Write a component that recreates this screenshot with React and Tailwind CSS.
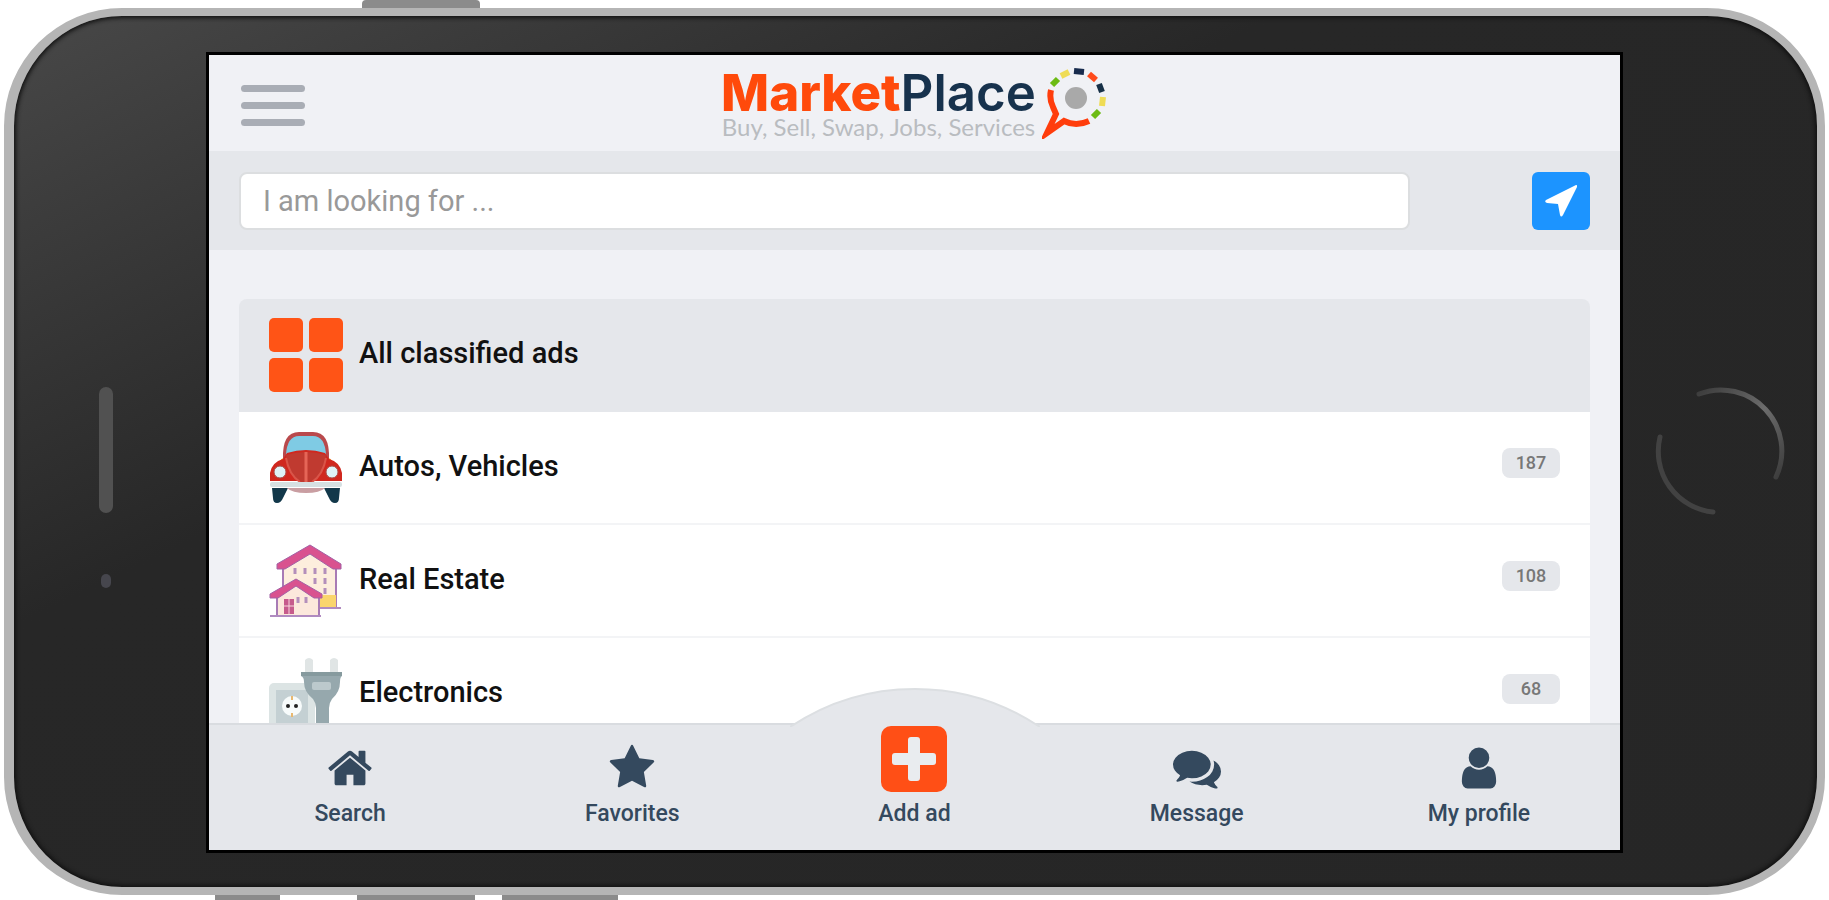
const NAV_PATHS = {
  home: "M1472 992v480q0 26-19 45t-45 19h-384v-384h-256v384h-384q-26 0-45-19t-19-45v-480q0-1 .5-3t.5-3l575-474 575 474q1 2 1 6zm223-69l-62 74q-8 9-21 11h-3q-13 0-21-7l-692-577-692 577q-12 8-24 7-13-2-21-11l-62-74q-8-10-7-23.5t11-21.5l719-599q32-26 76-26t76 26l244 204v-195q0-14 9-23t23-9h192q14 0 23 9t9 23v408l219 182q10 8 11 21.5t-7 23.5z",
  star: "M1728 647q0 22-26 48l-363 354 86 500q1 7 1 20 0 21-10.500 35.500t-30.500 14.500q-19 0-40-12l-449-236-449 236q-22 12-40 12-21 0-31.500-14.500t-10.500-35.500q0-6 2-20l86-500-364-354q-25-27-25-48 0-37 56-46l502-73 225-455q19-41 49-41t49 41l225 455 502 73q56 9 56 46z",
  message: "M1408 768q0 139-94 257t-256.500 186.500-353.500 68.500q-86 0-176-16-124 88-278 128-36 9-86 16h-3q-11 0-20.500-8t-11.500-21q-1-3-1-6.500t.5-6.500 2-6l2.500-5 3.500-5.500 4-5 4.500-5 4-4.500q5-6 23-25t26-29.500 22.500-29 25-38.500 20.500-44q-124-72-195-177t-71-224q0-139 94-257t256.500-186.500 353.500-68.500 353.500 68.500 256.500 186.500 94 257zm384 256q0 120-71 224.500t-195 176.500q10 24 20.500 44t25 38.500 22.500 29 26 29.500 23 25q1 1 4 4.500t4.500 5 4 5 3.500 5.500l2.500 5 2 6 .5 6.500-1 6.500q-3 14-13 22t-22 7q-50-7-86-16-154-40-278-128-90 16-176 16-271 0-472-132 58 4 88 4 161 0 309-45t264-129q125-92 192-212t67-254q0-77-23-152 129 71 204 178t75 230z",
  user: "M1536 1399q0 109-62.500 187t-150.500 78h-854q-88 0-150.500-78t-62.500-187q0-85 8.500-160.500t31.500-152 58.500-131 94-89 134.500-34.500q131 128 313 128t313-128q76 0 134.500 34.500t94 89 58.500 131 31.500 152 8.500 160.500zm-256-887q0 159-112.500 271.500t-271.500 112.500-271.500-112.500-112.500-271.500 112.500-271.500 271.500-112.500 271.500 112.500 112.500 271.500z",
};

const NavIcon = ({ name }) => (
  <svg viewBox="0 0 1792 1792" className="size-12" fill="currentColor" aria-hidden="true">
    <path d={NAV_PATHS[name]} />
  </svg>
);

const AddIcon = () => (
  <svg viewBox="0 0 66 66" className="size-[66px]" aria-hidden="true">
    <rect width="66" height="66" rx="10" fill="#ff4f16" />
    <path d="M27 14q0-3 3-3h6q3 0 3 3v13h13q3 0 3 3v6q0 3-3 3H39v13q0 3-3 3h-6q-3 0-3-3V39H14q-3 0-3-3v-6q0-3 3-3h13z" fill="#e9ecef" />
  </svg>
);

const ArrowIcon = () => (
  <svg viewBox="0 0 32 32" className="size-8" fill="currentColor" aria-hidden="true">
    <path d="M31 0Q33 0 32 2L18 30Q16 33 15 30L13 19 2 18Q-1 17 1 15Z" />
  </svg>
);

const GridIcon = () => (
  <svg viewBox="0 0 74 74" className="size-full" fill="#ff5416" aria-hidden="true">
    <rect width="34" height="34" rx="5" />
    <rect x="40" width="34" height="34" rx="5" />
    <rect y="40" width="34" height="34" rx="5" />
    <rect x="40" y="40" width="34" height="34" rx="5" />
  </svg>
);

const CarIcon = () => (
  <svg viewBox="0 0 74 74" className="size-full" aria-hidden="true">
    <path d="M3 57h16l-5 10q-2 5-6 5t-4-5z" fill="#12384a" />
    <path d="M71 57H55l5 10q2 5 6 5t4-5z" fill="#12384a" />
    <path d="M18 57h38q-5 5-19 5t-19-5z" fill="#c99ea2" />
    <path d="M9 34q2-8 10-8v10zM65 34q-2-8-10-8v10z" fill="#f59a23" />
    <path d="M14 28Q13 1 30 1h14q17 0 16 27z" fill="#b9494c" />
    <path d="M17 24Q18 5 30 5h14q12 0 13 19z" fill="#7fcbe4" />
    <path d="M1 50V42Q3 31 14 28l4-6q19-6 38 0l4 6q11 3 13 14v8z" fill="#d0281f" />
    <path d="M17 24q20-6 40 0-1 18-14 27H31Q18 42 17 24z" fill="#c03a30" />
    <path d="M37 21v30" stroke="#e56557" strokeWidth="3" fill="none" />
    <path d="M17 27q3 17 14 24M57 27q-3 17-14 24" stroke="#d95549" strokeWidth="2" fill="none" />
    <circle cx="11" cy="41" r="6" fill="#dff3f7" stroke="#a9504c" strokeWidth="1" />
    <circle cx="63" cy="41" r="6" fill="#dff3f7" stroke="#a9504c" strokeWidth="1" />
    <rect x="1" y="51" width="72" height="5" rx="2" fill="#d6e0e2" />
  </svg>
);

const HouseIcon = () => (
  <svg viewBox="0 0 74 74" className="size-full" aria-hidden="true">
    <path d="M14 22 41 6l26 16v42H14z" fill="#fdeedd" stroke="#a87bb5" strokeWidth="2" />
    <path d="M50 51h17v12H50z" fill="#fad56d" />
    <path d="M26 24v6M36 24v6M46 24v6M56 24v6M46 34v6M56 34v6M56 44v6" stroke="#b48fbb" strokeWidth="3" />
    <path d="M8 20 41 1l31 19v5H64L41 10 16 25H8z" fill="#d9528f" stroke="#a361a5" strokeWidth="1" />
    <path d="M49 64h23" stroke="#b08bc0" strokeWidth="2" />
    <path d="M8 51 27 38l23 13v21H8z" fill="#fce8dc" stroke="#a87bb5" strokeWidth="2" />
    <path d="M29 53v6M37 53v6" stroke="#b48fbb" strokeWidth="3" />
    <path d="M15 55h10v15H15z" fill="#c65b8c" />
    <path d="M20 55v15M15 62h10" stroke="#f8d7dc" strokeWidth="1" />
    <path d="M1 50 27 35l26 15v4h-8L27 42 9 54H1z" fill="#d9528f" stroke="#a361a5" strokeWidth="1" />
    <path d="M1 72h51" stroke="#b08bc0" strokeWidth="2" />
  </svg>
);

const PlugIcon = () => (
  <svg viewBox="0 0 74 74" className="size-full" aria-hidden="true">
    <rect y="26" width="46" height="48" rx="5" fill="#dce4e4" />
    <rect x="7" y="33" width="32" height="41" fill="#c4d0d3" />
    <circle cx="23" cy="49" r="10" fill="#f7fbfb" />
    <circle cx="19" cy="49" r="2" fill="#222" />
    <circle cx="27" cy="49" r="2" fill="#222" />
    <path d="M23 39v4M23 56v4" stroke="#e8b870" strokeWidth="2" />
    <path d="M36 3q4-4 8 0v13h-8zM61 3q4-4 8 0v13h-8z" fill="#e0e5e5" />
    <path d="M32 15h41v4q-2 1-2 6 0 10-8 17-3 4-3 9v23H47V51q0-5-3-9-9-7-9-17 0-5-3-6z" fill="#96a8ad" />
    <path d="M32 15h41v4H32z" fill="#869a9e" />
    <rect x="43" y="25" width="19" height="8" rx="2" fill="#bcc9cc" />
  </svg>
);

const LogoMark = () => (
  <svg viewBox="0 0 66 72" className="mb-1 h-[72px] w-[66px]" fill="none" aria-hidden="true">
    <path d="M9 23q-2 9 2 17l3 7L5 66l17-12q12 6 25 0" stroke="#ff3d0c" strokeWidth="6" />
    <circle cx="34" cy="31" r="11" fill="#a9a9a9" />
    <g strokeWidth="6">
      <path d="m10 18 6-6" stroke="#6cbb14" />
      <path d="m19 9 8-4" stroke="#efdc55" />
      <path d="m32 4 10 1" stroke="#172b4d" />
      <path d="m47 7 7 6" stroke="#ff4b1c" />
      <path d="m57 17 3 8" stroke="#173047" />
      <path d="m61 30-1 9" stroke="#efdc55" />
      <path d="m57 44-6 6" stroke="#6cbb14" />
    </g>
  </svg>
);

const CATEGORIES = [
  { name: "All classified ads", Icon: GridIcon },
  { name: "Autos, Vehicles", Icon: CarIcon, count: 187 },
  { name: "Real Estate", Icon: HouseIcon, count: 108 },
  { name: "Electronics", Icon: PlugIcon, count: 68 },
];

const NAV_ITEMS = [
  { label: "Search", icon: "home" },
  { label: "Favorites", icon: "star" },
  { label: "Add ad" },
  { label: "Message", icon: "message" },
  { label: "My profile", icon: "user" },
];

const Header = () => (
  <header className="grid h-24 shrink-0 grid-cols-[1fr_auto_1fr] items-center px-8 pt-1">
    <button aria-label="Menu" className="flex w-16 flex-col gap-2.5">
      <span className="h-[7px] rounded-full bg-[#a9adb5]" />
      <span className="h-[7px] rounded-full bg-[#a9adb5]" />
      <span className="h-[7px] rounded-full bg-[#a9adb5]" />
    </button>
    <a href="#" className="flex items-center gap-1.5">
      <span className="flex flex-col items-center">
        <span className="font-[Inter] text-[51px] leading-[44px] font-semibold text-[#17324d]">
          <span className="font-extrabold text-[#ff4a0b]">Market</span>Place
        </span>
        <span className="font-[Lato] text-[24px] leading-6 text-[#b9bcc0]">Buy, Sell, Swap, Jobs, Services</span>
      </span>
      <LogoMark />
    </a>
  </header>
);

const SearchBar = () => (
  <form className="flex h-[99px] shrink-0 items-center bg-[#e5e7eb] px-[30px]">
    <input
      type="text"
      aria-label="I am looking for"
      placeholder="I am looking for ..."
      className="mr-[122px] h-[58px] min-w-0 flex-1 rounded-lg border-2 border-[#dcdee0] bg-white px-[22px] text-[29px] text-[#555] outline-none placeholder:text-[#999]"
    />
    <button type="button" aria-label="Use my location" className="flex size-[58px] items-center justify-center rounded-md bg-[#1c94ff] text-white">
      <ArrowIcon />
    </button>
  </form>
);

const CategoryList = () => (
  <ul className="mx-[30px] mt-[49px] overflow-hidden rounded-t-lg">
    {CATEGORIES.map(({ name, Icon, count }) => (
      <li key={name} className="border-b-2 border-[#f3f4f6] bg-white first:border-[#e5e7eb] first:bg-[#e5e7eb]">
        <a href="#" className="flex h-[111px] items-center px-[30px]">
          <span className="size-[74px]"><Icon /></span>
          <span className="mb-1 ml-4 flex-1 text-[29px] leading-8 font-medium text-[#111]">{name}</span>
          {count && (
            <span className="mb-2.5 flex h-[30px] w-[58px] items-center justify-center rounded-lg bg-[#e5e7eb] text-[18px] font-medium text-[#777]">{count}</span>
          )}
        </a>
      </li>
    ))}
  </ul>
);

const BottomNav = () => (
  <nav className="relative grid h-[127px] shrink-0 grid-cols-5 border-t-2 border-[#d9dce0] bg-[#e5e7eb]">
    <svg viewBox="0 0 250 40" className="absolute bottom-full left-1/2 -mb-0.5 h-10 w-[250px] -translate-x-1/2" aria-hidden="true">
      <path d="M0 40A224 224 0 0 1 250 40" fill="#e5e7eb" stroke="#dcdfe2" strokeWidth="2" />
    </svg>
    {NAV_ITEMS.map(({ label, icon }) => (
      <a key={label} href="#" className="relative flex flex-col items-center text-[#34495e]">
        <span className="flex h-[67px] items-end justify-center">
          {icon ? <NavIcon name={icon} /> : <AddIcon />}
        </span>
        <span className="mt-2 text-[23px] leading-7 font-medium">{label}</span>
      </a>
    ))}
  </nav>
);

const App = () => (
  <div className="flex h-screen flex-col overflow-hidden bg-white px-1 font-[Roboto,sans-serif]">
    <div className="flex h-2 shrink-0 pl-[358px]">
      <div className="w-[118px] rounded-t-sm bg-[#8b8b8b]" />
    </div>

    <div className="flex min-h-0 flex-1 rounded-[118px] border-8 border-l-10 border-[#b5b5b5] bg-linear-to-br from-[#484848] via-[#272727] via-35% to-[#262626] shadow-[inset_0_0_4px_2px_#111]">
      <div className="flex w-[192px] shrink-0 flex-col items-center pt-[371px] pr-2">
        <div className="h-[126px] w-3.5 rounded-full bg-[#515151]" />
        <div className="mt-[61px] h-3.5 w-2.5 rounded-full bg-[#46464d]" />
      </div>

      <div className="mt-[36px] mb-[34px] flex min-w-0 flex-1 flex-col overflow-hidden border-[3px] border-black bg-[#f0f1f5]">
        <Header />
        <SearchBar />
        <main className="min-h-0 flex-1 overflow-hidden">
          <CategoryList />
        </main>
        <BottomNav />
      </div>

      <div className="flex w-[194px] shrink-0 items-center justify-center">
        <svg viewBox="0 0 130 130" className="size-[130px]" fill="none" strokeWidth="5" strokeLinecap="round" aria-hidden="true">
          <defs>
            <linearGradient id="ringTop" x1="0" y1="0" x2="1" y2="1">
              <stop offset="0" stopColor="#3c3c3c" />
              <stop offset=".5" stopColor="#6c6c6c" />
              <stop offset="1" stopColor="#3c3c3c" />
            </linearGradient>
          </defs>
          <path d="M44 7A61 61 0 0 1 121 90" stroke="url(#ringTop)" />
          <path d="M5 50A61 61 0 0 0 58 125" stroke="#424242" />
        </svg>
      </div>
    </div>

    <div className="flex h-[5px] shrink-0 pl-[211px]">
      <div className="w-[65px] bg-[#8b8b8b]" />
      <div className="ml-[77px] w-[118px] bg-[#8b8b8b]" />
      <div className="ml-[27px] w-[116px] bg-[#8b8b8b]" />
    </div>
  </div>
);

export default App;
